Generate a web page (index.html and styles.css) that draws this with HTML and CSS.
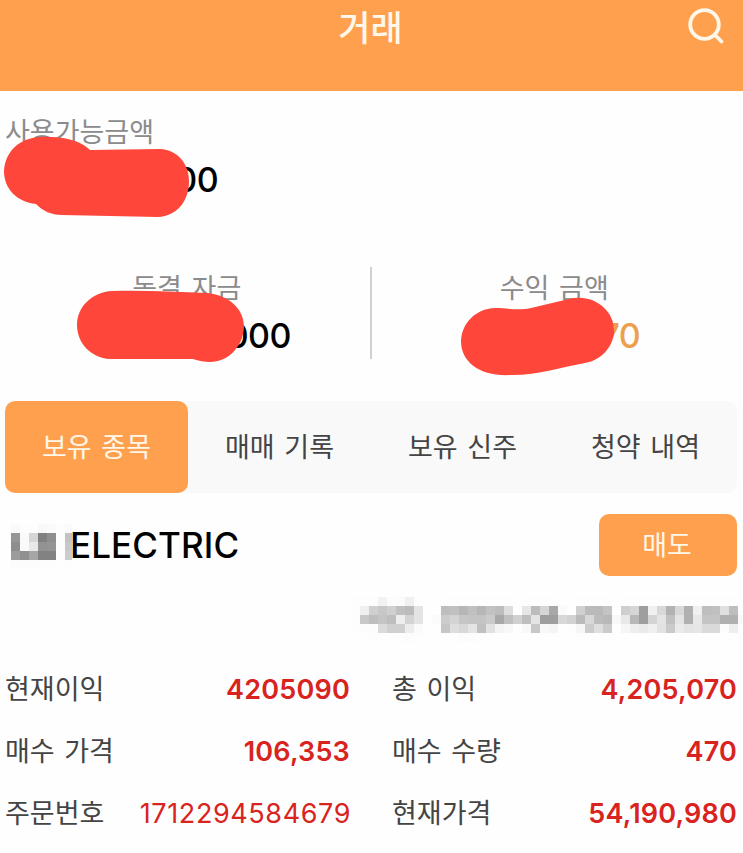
FILE: index.html
```
<!DOCTYPE html>
<html lang="ko">
	<head>
		<meta charset="UTF-8">
		<title>거래</title>
		<link rel="stylesheet" href="styles.css">
	</head>
	<body>
		<header class="header">
			<h1 class="title">거래</h1>
			<svg class="search" width="38" height="40" viewBox="0 0 38 40">
				<circle cx="17.5" cy="17.5" r="14.3"/>
				<path d="M28 28L34.5 34.5"/>
			</svg>
		</header>
		<main class="main">
			<section class="balance">
				<p class="label">사용가능금액</p>
				<p class="amount">000</p>
				<svg class="mark mark-balance" width="189" height="84" viewBox="0 0 189 84">
					<path d="M36 1C57 0 76 4 86 14L156 13C174 14 185 28 185 45C185 65 173 80 154 81L58 79C47 79 39 75 32 68C13 66 0 53 0 35C1 16 15 2 36 1Z"/>
				</svg>
			</section>
			<section class="stats">
				<div class="stat">
					<p class="label">동결 자금</p>
					<p class="amount">000</p>
					<svg class="mark mark-frozen" width="168" height="74" viewBox="0 0 168 74">
						<path d="M35 1C68 0 98 2 130 3C151 5 167 18 167 37C166 57 151 72 133 72C127 72 122 71 116 69L33 69C14 68 0 53 0 35C0 17 15 2 35 1Z"/>
					</svg>
				</div>
				<div class="stat profit">
					<p class="label">수익 금액</p>
					<p class="amount">70</p>
					<svg class="mark mark-profit" width="154" height="80" viewBox="0 0 154 80">
						<path d="M34 11C47 11 56 14 70 11L108 2C132-4 153 13 153 33C153 49 141 63 124 66C101 70 78 78 51 78C20 80 0 66 0 44C1 26 14 12 34 11Z"/>
					</svg>
				</div>
			</section>
			<nav class="tabs">
				<a class="tab active">보유 종목</a>
				<a class="tab">매매 기록</a>
				<a class="tab">보유 신주</a>
				<a class="tab">청약 내역</a>
			</nav>
			<section class="stock">
				<h2 class="name">
					<svg class="mosaic" id="nameMosaic" width="61" height="45"></svg>
					<span>ELECTRIC</span>
				</h2>
				<button class="sell">매도</button>
			</section>
			<div class="time">
				<svg class="mosaic" id="timeMosaic" width="392" height="45"></svg>
			</div>
			<dl class="detail">
				<div class="item"><dt>현재이익</dt><dd>4205090</dd></div>
				<div class="item"><dt>총 이익</dt><dd>4,205,070</dd></div>
				<div class="item"><dt>매수 가격</dt><dd>106,353</dd></div>
				<div class="item"><dt>매수 수량</dt><dd>470</dd></div>
				<div class="item"><dt>주문번호</dt><dd class="thin">1712294584679</dd></div>
				<div class="item"><dt>현재가격</dt><dd>54,190,980</dd></div>
			</dl>
		</main>
		<script type="text/javascript" src="mosaic.js"></script>
	</body>
</html>
```

FILE: styles.css
```
*{
	box-sizing: border-box;
}
body{
	margin: 0;
	background: #fefefe;
	color: #444;
	font-family: Inter, "Noto Sans CJK KR", sans-serif;
	font-size: 27px;
	word-spacing: 2px;
}
h1,h2,p,dl,dd{
	margin: 0;
}
.header{
	height: 91px;
	padding: 7px 18px 0 56px;
	display: flex;
	align-items: flex-start;
	background: #ffa04f;
}
.title{
	flex: 1;
	padding: 1px 2px 0 0;
	line-height: 40px;
	text-align: center;
	font-size: 35px;
	font-weight: 500;
	color: #fff8ea;
}
.search{
	fill: none;
	stroke: #fff8ea;
	stroke-width: 3.8;
	stroke-linecap: round;
}
.main{
	padding: 0 6px 0 5px;
}
.label{
	height: 40px;
	line-height: 44px;
	color: #8b8b8b;
}
.amount{
	line-height: 40px;
	padding-top: 9px;
	height: 48px;
	font-size: 34px;
	font-weight: 500;
	letter-spacing: -0.6px;
	color: #000;
}
.balance{
	position: relative;
	height: 176px;
	padding-top: 20px;
}
.balance .amount{
	padding-left: 149px;
}
/* red strokes painted over the amounts */
.mark{
	position: absolute;
	fill: #ff463a;
}
.mark-balance{
	left: -1px;
	top: 45px;
}
.stats{
	display: flex;
	height: 92px;
	margin-right: -1px;
}
.stat{
	position: relative;
	flex: 1;
	left: -1px;
	text-align: center;
}
.stat:first-child{
	border-right: 2px solid #d0d0d0;
}
.stat:first-child .amount{
	padding-left: 144px;
}
.profit .amount{
	padding-left: 132px;
	color: #eba04f;
}
.mark-frozen{
	left: 73px;
	top: 23px;
}
.mark-profit{
	left: 89px;
	top: 30px;
}
.tabs{
	display: flex;
	height: 92px;
	margin-top: 42px;
	border-radius: 10px;
	background: #f9f9f9;
}
.tab{
	flex: 1;
	line-height: 94px;
	text-align: center;
	border-radius: 10px;
}
.active{
	background: #ffa04f;
	color: #fff8ea;
}
.stock{
	display: flex;
	justify-content: space-between;
	align-items: center;
	height: 62px;
	margin-top: 21px;
}
.name{
	display: flex;
	align-items: center;
	padding-left: 6px;
	font-size: 35px;
	font-weight: 500;
	color: #000;
}
.name span{
	margin-left: -2px;
	letter-spacing: 0.1px;
}
.name .mosaic{
	margin-top: 3px;
}
.sell{
	width: 138px;
	height: 62px;
	padding: 0 2px 4px 0;
	border: 0;
	border-radius: 10px;
	background: #ffa04f;
	color: #fff8ea;
	font: inherit;
}
.mosaic{
	display: block;
	shape-rendering: crispEdges;
}
.time{
	display: flex;
	justify-content: flex-end;
	height: 45px;
	margin: 21px -6px 0 0;
}
.detail{
	display: grid;
	grid-template-columns: 345px 345px;
	column-gap: 42px;
	grid-auto-rows: 62px;
	padding-top: 17px;
}
.item{
	display: flex;
	justify-content: space-between;
	line-height: 62px;
}
.item dd{
	font-weight: 600;
	letter-spacing: 0.2px;
	color: #d8231f;
}
.item .thin{
	font-weight: 400;
	letter-spacing: 0.6px;
	margin-right: -1px;
}
```

FILE: mosaic.js
```
// each pair of hex digits is the grey of one 9px block
var nameRows = [
	'fafdfdf8fafdfa',
	'97fad6808efdc2',
	'8efae89294fdc8',
	'9c90a68282fdcc',
	'fcfcfcfdfdfefd'
];
var timeRows = [
	'fd fdfdf2fcfbf0fd fefe fdfdfdfdfdfdfdfd fefdfdfdfdfefefdfdfdfd fefdfdfdfdfdfdfdfdfdfdfdfdfdfe',
	'fd f0d0c8d0c0bce4 fefe bec0b6c0b6c2bcde fee6bcd6a8fafed0babac4 feced69ef0d8b2d8b0f0bec0e0befe',
	'fd c8bec4beeed4e4 fefb ccd4c6c4c4caa8c0 d0bee49e9ed8d2bad8bcb8 f8e8b89ed4e4c0e4b0e8c4c4b0b0f8',
	'fd fcfcdad0d0ecfa fefe c6ded8e4c0e2f4f8 fef8c8f8f4fefdf6ccdeca fef6eeeaf0e2caeae4e6dadafceefe',
	'fe fefdfdfdfdfcfd fefe fefefcfcfdfefefe fefefefefefefefdfdfdfd fefefefefefefefefefefefefefefe'
];
draw('nameMosaic',nameRows);
draw('timeMosaic',timeRows);

function draw(id,rows){
	var html = '';
	for(var y=0;y<rows.length;y++){
		var cells = rows[y].replace(/ /g,'').match(/../g);
		for(var x=0;x<cells.length;x++){
			html += '<rect x="'+x*9+'" y="'+y*9+'" width="9" height="9" fill="#'+cells[x]+cells[x]+cells[x]+'"/>';
		}
	}
	document.getElementById(id).innerHTML = html;
}
```
